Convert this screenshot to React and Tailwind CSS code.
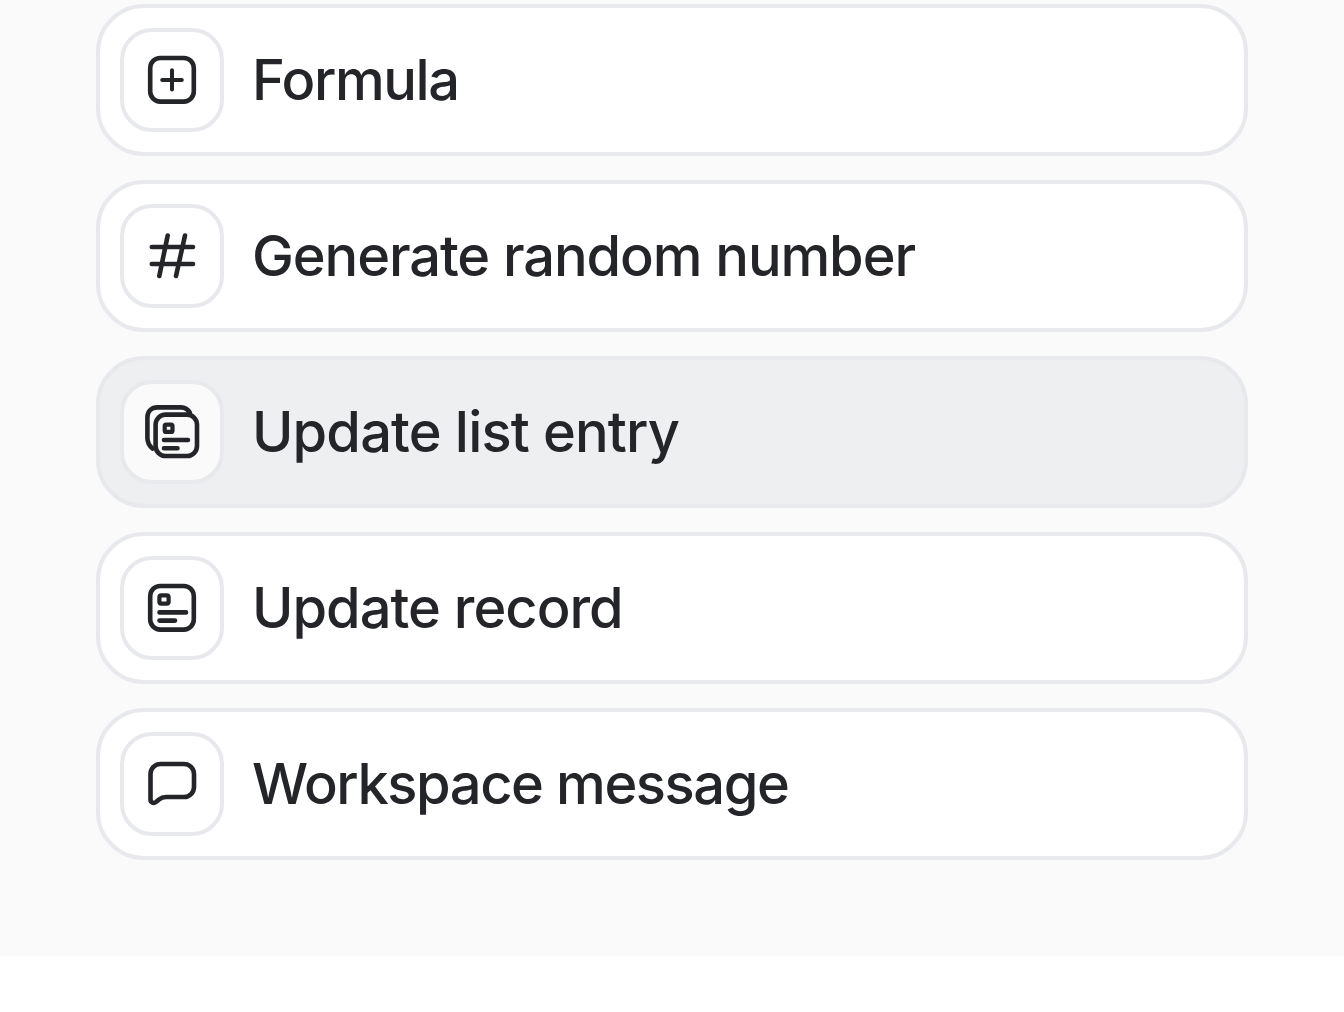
const S = { fill: "none", stroke: "currentColor", strokeWidth: 4.6, strokeLinecap: "round", strokeLinejoin: "round" };

function Icon({ children }) {
  return (
    <svg width="64" height="64" viewBox="0 0 64 64" {...S}>
      {children}
    </svg>
  );
}

const PlusIcon = () => (
  <Icon>
    <rect x="10.2" y="10" width="43.6" height="43.6" rx="10" />
    <path d="M32 22.3V41.5M22.2 32H41.8" strokeWidth="4" />
  </Icon>
);

const HashIcon = () => (
  <Icon>
    <path d="M11.8 23H53M11.8 40H53M27.7 11.5L19.3 52M45 11.5L36 52" />
  </Icon>
);

const RecordIcon = () => (
  <Icon>
    <rect x="10.2" y="10" width="43.6" height="43.6" rx="10" />
    <rect x="19.4" y="19.3" width="9.2" height="8.4" rx="2" strokeWidth="4.2" />
    <path d="M19.5 36.4H46M19.5 44.6H35" />
  </Icon>
);

const ListEntryIcon = () => (
  <Icon>
    <path d="M50 13C48 9.5 45 7.4 41 7.4H17.5C11.5 7.4 7.4 11.5 7.4 17.5V38C7.4 42 9 45.5 12.5 48.5" />
    <rect x="15.6" y="14.6" width="41.4" height="41.4" rx="10" />
    <rect x="24.7" y="24.7" width="7.8" height="7.2" rx="1.5" strokeWidth="4.2" />
    <path d="M24 40H48M24 48.3H37.5" />
  </Icon>
);

const MessageIcon = () => (
  <Icon>
    <path d="M20.5 12H44a10 10 0 0 1 10 10V35a10 10 0 0 1-10 10H26c-3 0-5 .8-7 2.5l-3 2.5c-2.4 1.8-5.5.6-5.5-2.5V22a10 10 0 0 1 10-10z" />
  </Icon>
);

const rows = [
  { label: "Formula", icon: <PlusIcon />, track: "tracking-[-1.4px]" },
  { label: "Generate random number", icon: <HashIcon />, track: "tracking-[-1.1px]" },
  { label: "Update list entry", icon: <ListEntryIcon />, active: true, track: "tracking-[-0.85px]" },
  { label: "Update record", icon: <RecordIcon />, track: "tracking-[-1px]" },
  { label: "Workspace message", icon: <MessageIcon />, track: "tracking-[-1.42px]" },
];

export default function App() {
  return (
    <div className="min-h-[1012px] bg-white font-['Inter',sans-serif] text-[#232529]">
      <div className="flex h-[956px] flex-col gap-6 bg-[#fafafa] px-24 pt-1">
        {rows.map((r) => (
          <div
            key={r.label}
            className={`flex h-[152px] items-center gap-[28px] rounded-[48px] border-4 border-[#e8e9ed] px-5 ${
              r.active ? "bg-[#eeeff1]" : "bg-white"
            }`}
          >
            <div
              className={`flex h-[104px] w-[104px] items-center justify-center rounded-[32px] border-4 border-[#e8e9ed] ${
                r.active ? "bg-[#fafafa]" : "bg-white"
              }`}
            >
              {r.icon}
            </div>
            <span className={`text-[56px] leading-[80px] font-medium ${r.track}`}>{r.label}</span>
          </div>
        ))}
      </div>
    </div>
  );
}
